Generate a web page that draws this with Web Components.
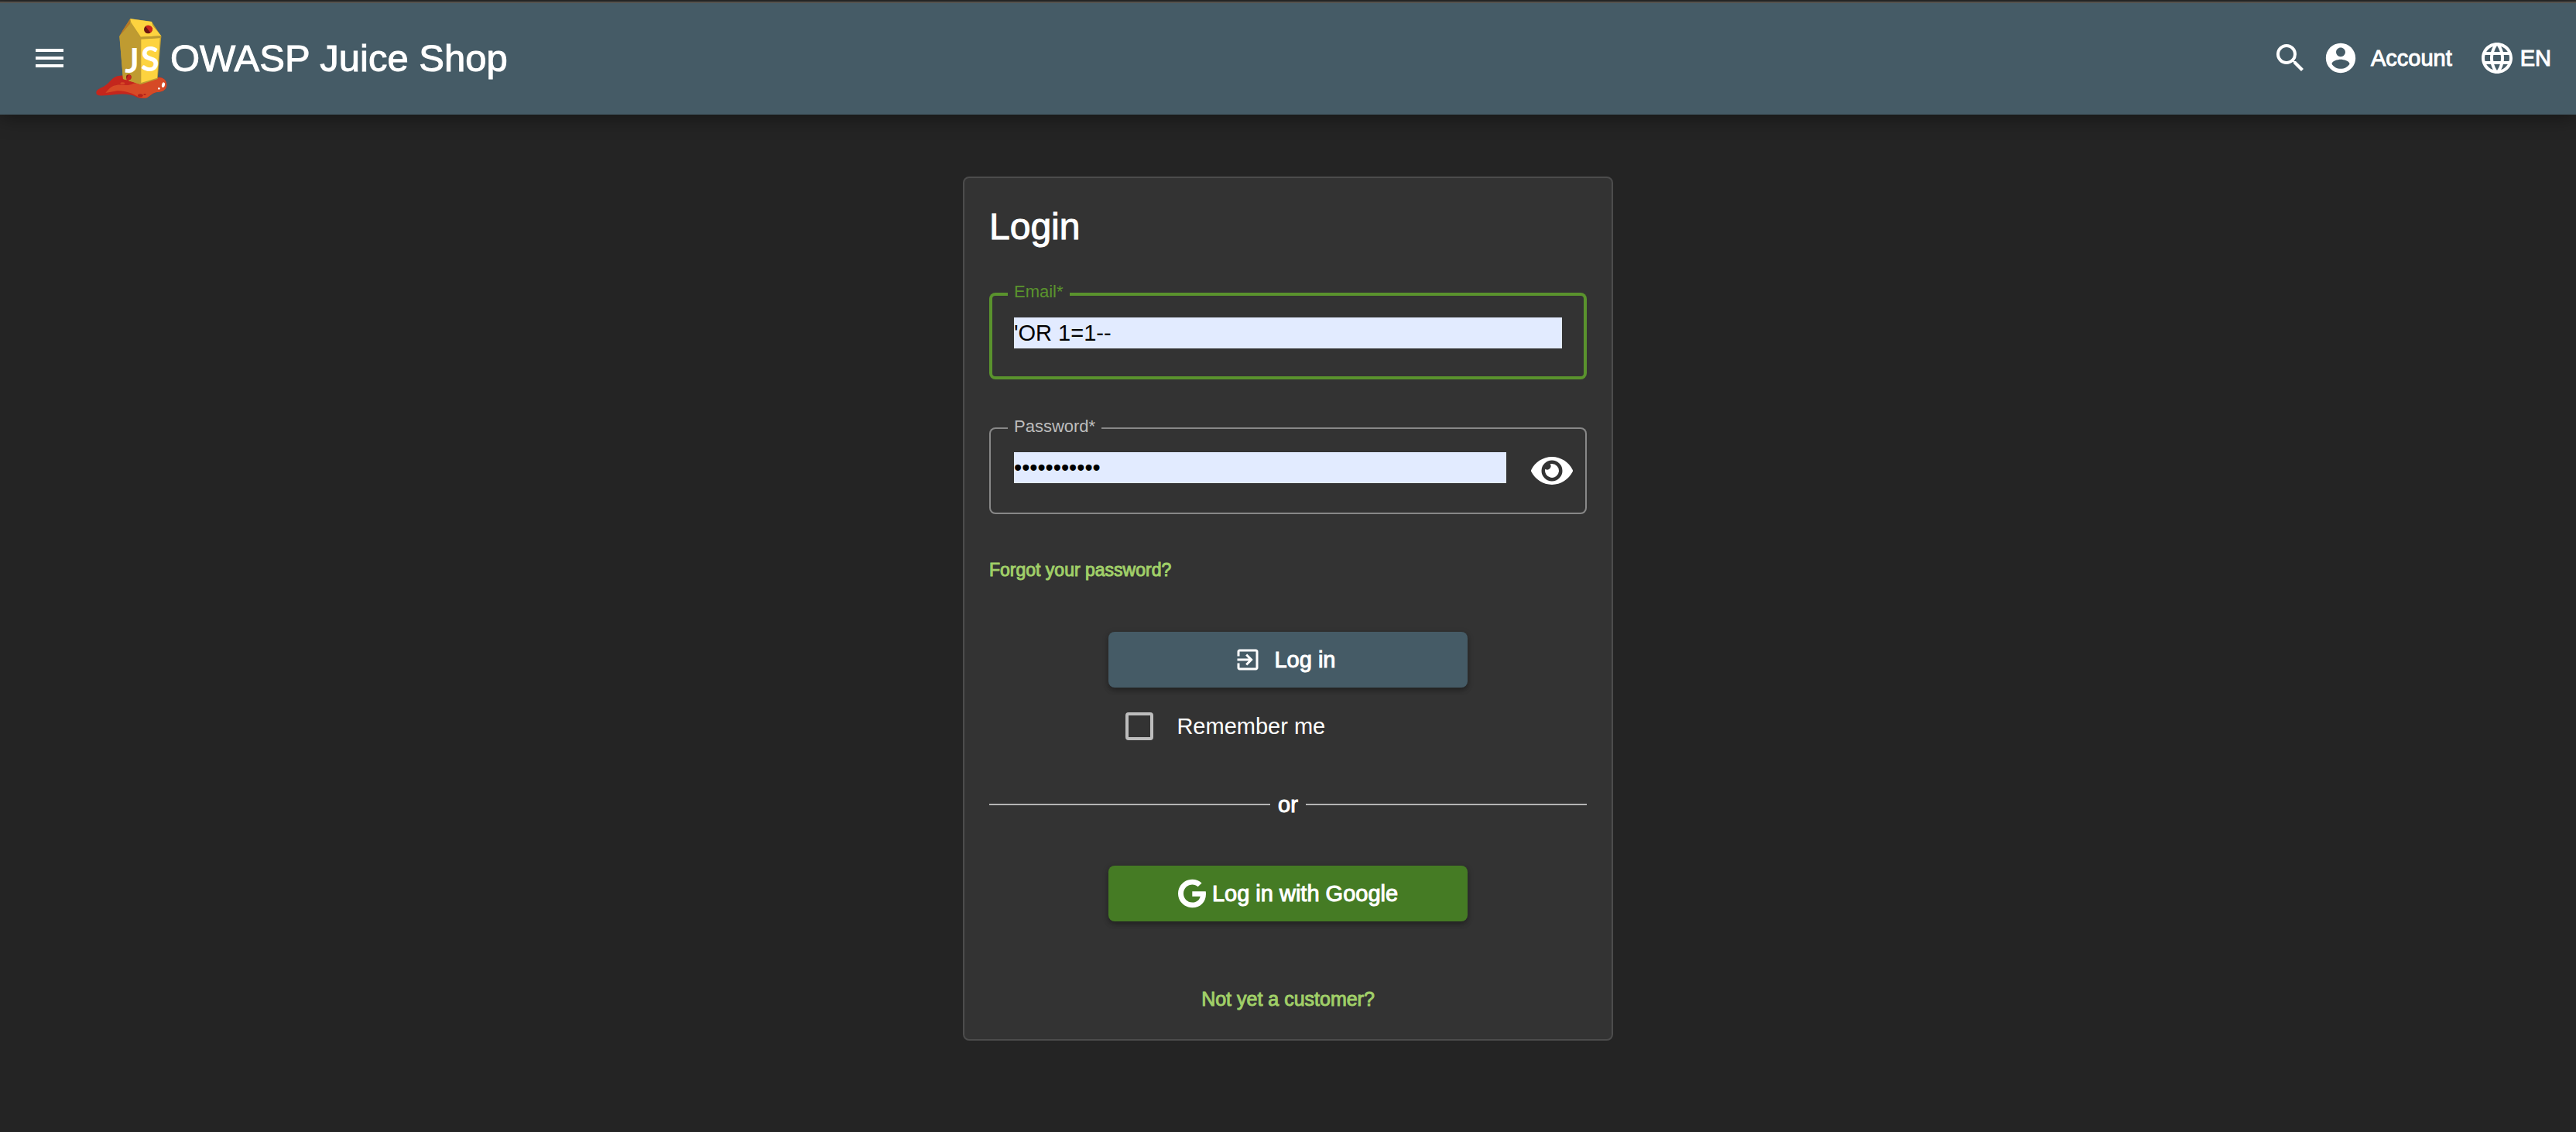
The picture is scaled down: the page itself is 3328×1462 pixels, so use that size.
<!DOCTYPE html>
<html lang="en">
<head>
<meta charset="utf-8">
<meta name="viewport" content="width=device-width, initial-scale=1">
<title>OWASP Juice Shop</title>
<style>
  :root {
    --page: #242424;
    --card: #333333;
    --primary: #455b66;
    --accent: #457b24;
    --focus: #5a932d;
    --link: #a0cf68;
    --text: 29px;
  }
  body {
    margin: 0;
    min-height: 100vh;
    background: var(--page);
    color: #fff;
    font-family: Helvetica, "Liberation Sans", Arial, sans-serif;
    font-size: var(--text);
  }
</style>
</head>
<body>
<juice-app></juice-app>

<script>
const define = (name, html, setup) => {
  const template = document.createElement('template');
  template.innerHTML = html;
  customElements.define(name, class extends HTMLElement {
    constructor() {
      super();
      this.attachShadow({ mode: 'open' }).append(template.content.cloneNode(true));
    }
    connectedCallback() {
      if (setup && !this.ready) setup(this, this.shadowRoot);
      this.ready = true;
    }
  });
};

const ICONS = {
  menu: ['0 0 24 24', 'M3 18h18v-2H3v2zm0-5h18v-2H3v2zm0-7v2h18V6H3z'],
  search: ['0 0 24 24', 'M15.5 14h-.79l-.28-.27A6.471 6.471 0 0 0 16 9.5 6.5 6.5 0 1 0 9.5 16c1.61 0 3.09-.59 4.23-1.57l.27.28v.79l5 4.99L20.49 19l-4.99-5zm-6 0C7.01 14 5 11.99 5 9.5S7.01 5 9.5 5 14 7.01 14 9.5 11.99 14 9.5 14z'],
  account: ['0 0 24 24', 'M12 2C6.48 2 2 6.48 2 12s4.48 10 10 10 10-4.48 10-10S17.52 2 12 2zm0 3c1.66 0 3.1 1.34 3.1 3s-1.44 3.1-3.1 3.1S8.900 9.660 8.900 8 10.340 5 12 5zm0 14.200c-2.500 0-4.710-1.280-6-3.220.030-1.990 4-3.080 6-3.080 1.990 0 5.970 1.090 6 3.080-1.290 1.940-3.500 3.220-6 3.220z'],
  language: ['0 0 24 24', 'M11.990 2C6.470 2 2 6.480 2 12s4.470 10 9.990 10C17.520 22 22 17.520 22 12S17.520 2 11.990 2zm6.930 6h-2.950c-.320-1.250-.780-2.450-1.380-3.560 1.840.630 3.370 1.910 4.330 3.560zM12 4.040c.830 1.200 1.480 2.530 1.910 3.960h-3.820c.430-1.430 1.080-2.760 1.910-3.960zM4.260 14C4.100 13.360 4 12.690 4 12s.100-1.360.260-2h3.380c-.080.660-.140 1.320-.140 2s.060 1.340.140 2H4.260zm.820 2h2.950c.320 1.250.780 2.450 1.380 3.560-1.840-.630-3.370-1.900-4.330-3.560zm2.950-8H5.080c.960-1.660 2.490-2.930 4.330-3.560C8.810 5.550 8.350 6.750 8.030 8zM12 19.960c-.830-1.200-1.480-2.530-1.910-3.960h3.820c-.430 1.430-1.080 2.760-1.910 3.960zM14.340 14H9.660c-.090-.660-.160-1.320-.160-2s.070-1.350.160-2h4.680c.090.650.160 1.320.160 2s-.070 1.340-.160 2zm.250 5.560c.600-1.110 1.060-2.310 1.380-3.560h2.950c-.960 1.650-2.490 2.930-4.330 3.560zM16.360 14c.080-.660.140-1.320.140-2s-.060-1.340-.140-2h3.380c.160.640.260 1.310.260 2s-.100 1.360-.260 2h-3.380z'],
  exit: ['0 0 24 24', 'M10.090 15.590L11.500 17l5-5-5-5-1.410 1.410L12.670 11H3v2h9.670l-2.580 2.590zM19 3H5c-1.110 0-2 .9-2 2v4h2V5h14v14H5v-4H3v4c0 1.100.890 2 2 2h14c1.100 0 2-.9 2-2V5c0-1.100-.9-2-2-2z'],
  eye: ['0 0 576 512', 'M572.520 241.400C518.290 135.590 410.930 64 288 64S57.680 135.640 3.480 241.410a32.350 32.350 0 0 0 0 29.190C57.710 376.410 165.070 448 288 448s230.320-71.640 284.520-177.410a32.350 32.350 0 0 0 0-29.190zM288 400a144 144 0 1 1 144-144 143.930 143.930 0 0 1-144 144zm0-240a95.310 95.310 0 0 0-25.310 3.790 47.850 47.850 0 0 1-66.900 66.900A95.780 95.780 0 1 0 288 160z'],
  google: ['0 0 488 512', 'M488 261.800C488 403.300 391.100 504 248 504 110.800 504 0 393.200 0 256S110.800 8 248 8c66.800 0 123 24.500 166.300 64.900l-67.500 64.900C258.500 52.600 94.300 116.600 94.300 256c0 86.500 69.100 156.600 153.700 156.600 98.200 0 135-70.400 140.800-106.900H248v-85.300h236.100c2.300 12.700 3.900 24.900 3.900 41.400z']
};

define('juice-icon', `
  <style>
    :host { display: block; flex: none; width: 48px; height: 48px; }
    svg { display: block; width: 100%; height: 100%; fill: currentColor; }
  </style>
  <svg aria-hidden="true"><path/></svg>`,
  (host, root) => {
    const [box, d] = ICONS[host.getAttribute('name')];
    root.querySelector('svg').setAttribute('viewBox', box);
    root.querySelector('path').setAttribute('d', d);
  });

define('juice-logo', `
  <style>
    :host { display: block; flex: none; width: 92px; height: 103px; }
    svg { display: block; width: 100%; height: 100%; }
    text { font: bold 130px Lato, "Liberation Sans", sans-serif; fill: #fff; text-anchor: middle; -webkit-text-stroke: 0; }
  </style>
  <svg viewBox="42 42 276 309" aria-hidden="true">
    <path fill="#c4261d" d="M43 331C42 318 55 313 72 305C98 291 102 265 136 263L150 262L286 269C303 269 317 282 316 300C315 319 299 326 280 327C262 329 256 338 242 347C234 352 213 352 202 347C181 336 153 332 119 336C96 338 74 342 54 340Q44 339 43 331Z"/>
    <path fill="#d64a26" d="M79 330C92 313 104 301 125 299C146 297 166 305 186 294L282 270C303 269 317 282 316 300C315 319 299 326 280 327C262 329 256 338 242 347C234 351 218 350 207 346C182 331 150 318 116 323Z"/>
    <ellipse cx="214" cy="340" rx="10" ry="6" fill="#b5221b"/>
    <ellipse cx="231" cy="336" rx="5" ry="3" fill="#b5221b"/>
    <ellipse cx="145" cy="293" rx="9" ry="4" fill="#d64a26"/>
    <ellipse cx="303" cy="299" rx="6" ry="10" fill="#fff" transform="rotate(12 303 299)"/>
    <circle cx="286" cy="313" r="4" fill="#fff"/>
    <path fill="#bd9b31" d="M175 42L133 110L147 276L216 297L281 276L295 111L258 54Z"/>
    <path fill="#b87924" d="M175 43L174 62L133 110L146 86Z"/>
    <path fill="#bf9b31" d="M133 110L175 64L215 119L215 297L147 276Z"/>
    <path fill="#fdd33f" d="M175 43L258 54L261 69L295 109L216 113L178 57Z"/>
    <path fill="#fdd33f" d="M217 121L290 117L279 272L217 291Z"/>
    <path fill="#bd9b31" d="M215 113L295 109L294 117L216 122Z"/>
    <circle cx="244" cy="84" r="16" fill="#6b1512"/>
    <path fill="#c8251e" d="M234 72C240 65 257 67 261 79C263 88 258 94 253 97Z"/>
    <text x="182" y="252">J</text>
    <text x="252" y="246">S</text>
    <circle cx="169" cy="269" r="10" fill="#8e1c17"/>
    <path fill="#c8251e" d="M168 260C178 257 183 271 174 278L160 286Q158 274 168 260Z"/>
  </svg>`);

define('juice-header', `
  <style>
    :host { display: block; }
    header {
      display: flex; align-items: center; box-sizing: border-box; height: 146px;
      padding: 0 32px 2px 40px; border-top: 2px solid #55524e;
      background: var(--primary); box-shadow: 0 4px 24px rgba(0, 0, 0, .4);
      -webkit-text-stroke: 1px;
    }
    button {
      display: flex; align-items: center; padding: 0; border: 0; background: none;
      color: inherit; font: inherit; line-height: 36px; cursor: pointer;
    }
    .brand {
      display: flex; align-items: center; gap: 4px; margin-left: 36px;
      color: inherit; font-size: 49px; line-height: 64px; text-decoration: none; white-space: nowrap;
    }
    nav { display: flex; align-items: center; margin-left: auto; }
    .account { gap: 16px; margin: 0 34px 0 18px; }
    .account juice-icon { width: 46px; height: 46px; }
    .language { gap: 6px; }
  </style>
  <header>
    <button aria-label="Open side menu"><juice-icon name="menu"></juice-icon></button>
    <a class="brand" href="#"><juice-logo></juice-logo><span>OWASP Juice Shop</span></a>
    <nav>
      <button aria-label="Search"><juice-icon name="search"></juice-icon></button>
      <button class="account"><juice-icon name="account"></juice-icon><span>Account</span></button>
      <button class="language"><juice-icon name="language"></juice-icon><span>EN</span></button>
    </nav>
  </header>`);

define('juice-field', `
  <style>
    :host { display: block; position: relative; --line: #888; --label: #bdbdbd; --weight: 2px; }
    :host([active]) { --line: var(--focus); --label: var(--focus); --weight: 4px; }
    .box {
      display: flex; align-items: flex-start; gap: 32px; box-sizing: border-box; min-height: 112px;
      padding: 32px; border-radius: 8px; box-shadow: inset 0 0 0 var(--weight) var(--line);
    }
    :host([reveal]) .box { padding-right: 18px; }
    label {
      position: absolute; top: -13px; left: 24px; padding: 0 8px;
      background: var(--card); color: var(--label); font-size: 22px; line-height: 24px;
    }
    input {
      flex: 1; min-width: 0; box-sizing: border-box; height: 40px; padding: 0; border: 0; outline: 0;
      border-radius: 0; background: #e2ebff; color: #000; font: inherit;
    }
  </style>
  <div class="box"><input id="control"><slot></slot></div>
  <label for="control"><span></span>*</label>`,
  (host, root) => {
    const input = root.querySelector('input');
    input.type = host.getAttribute('type');
    input.value = host.getAttribute('value');
    root.querySelector('span').textContent = host.getAttribute('label');
  });

define('juice-button', `
  <style>
    :host { display: block; width: 60%; margin: 0 auto; }
    button {
      display: flex; align-items: center; justify-content: center; width: 100%; height: 72px;
      padding: 0; border: 0; border-radius: 8px; background: var(--fill, var(--primary));
      color: #fff; font: inherit; cursor: pointer; -webkit-text-stroke: 1px;
      box-shadow: 0 4px 6px rgba(0, 0, 0, .2), 0 2px 8px rgba(0, 0, 0, .2);
    }
  </style>
  <button><slot></slot></button>`);

define('juice-login', `
  <style>
    :host {
      display: block; box-sizing: border-box; width: 840px; max-width: 100%;
      padding: 32px 32px 36px; border: 2px solid #4c4c4c; border-radius: 8px; background: var(--card);
    }
    h1 { margin: 0 0 54px; font-size: 48px; font-weight: 400; line-height: 62px; }
    h1, a, .or, juice-button { -webkit-text-stroke: 1px; }
    juice-field + juice-field { margin-top: 62px; }
    a { color: var(--link); text-decoration: none; line-height: 32px; }
    .forgot { display: block; width: fit-content; margin: 56px 0 64px; font-size: 23px; }
    .submit juice-icon { width: 36px; height: 36px; margin: 0 16px 0 -8px; }
    .remember {
      display: flex; align-items: center; gap: 30px; width: 60%; box-sizing: border-box;
      margin: 32px auto 66px; padding-left: 22px; line-height: 36px;
    }
    .remember input {
      appearance: none; box-sizing: border-box; width: 36px; height: 36px; margin: 0;
      border: 4px solid #bdbdbd; border-radius: 4px;
    }
    .or { display: flex; align-items: center; gap: 10px; margin-bottom: 62px; line-height: 34px; }
    .or::before, .or::after { content: ""; flex: 1; height: 2px; background: #b5b5b5; }
    .google { --fill: var(--accent); }
    .google juice-icon { width: 36px; height: 38px; margin-right: 8px; }
    .join { display: block; width: fit-content; margin: 84px auto 0; font-size: 25px; }
  </style>
  <h1>Login</h1>
  <juice-field active type="text" label="Email" value="'OR 1=1--"></juice-field>
  <juice-field reveal type="password" label="Password" value="password123"><juice-reveal></juice-reveal></juice-field>
  <a class="forgot" href="#">Forgot your password?</a>
  <juice-button class="submit"><juice-icon name="exit"></juice-icon><span>Log in</span></juice-button>
  <div class="remember"><input type="checkbox" id="remember"><label for="remember">Remember me</label></div>
  <div class="or">or</div>
  <juice-button class="google"><juice-icon name="google"></juice-icon><span>Log in with Google</span></juice-button>
  <a class="join" href="#">Not yet a customer?</a>`);

define('juice-reveal', `
  <style>
    :host { display: block; }
    button { display: block; padding: 0; border: 0; background: none; color: #fff; cursor: pointer; }
    juice-icon { width: 54px; }
  </style>
  <button aria-label="Display the password"><juice-icon name="eye"></juice-icon></button>`);

define('juice-app', `
  <style>
    :host { display: block; border-top: 2px solid #2a2a2a; }
    main { display: flex; justify-content: center; padding: 80px 32px; }
  </style>
  <juice-header></juice-header>
  <main><juice-login></juice-login></main>`);
</script>
</body>
</html>
